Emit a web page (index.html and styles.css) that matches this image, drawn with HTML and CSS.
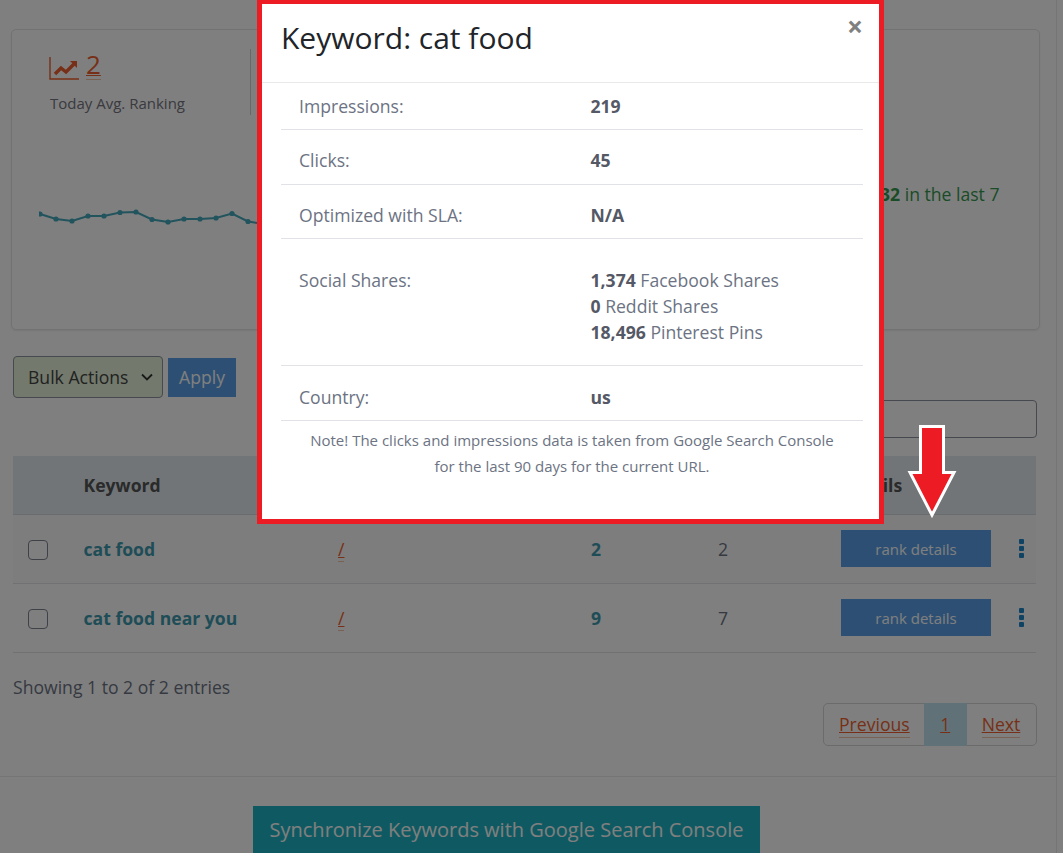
FILE: index.html
```html
<!DOCTYPE html>
<html lang="en">
<head>
    <meta charset="UTF-8">
    <meta name="viewport" content="width=device-width, initial-scale=1.0">
    <title>Keyword rank tracker</title>
    <link rel="stylesheet" href="styles.css">
</head>
<body>
    <div class="page">
        <div class="panel">
            <div class="card">
                <div class="stat">
                    <div class="stat-value">
                        <svg class="stat-icon" width="30" height="23" viewBox="0 0 30 23">
                            <path d="M1 0V22H30" fill="none" stroke="#ee5f2e" stroke-width="1.4"/>
                            <path d="M6 17L12 11L17 15L25 7" fill="none" stroke="#ee5f2e" stroke-width="3.4"/>
                            <path d="M21 4H28V11Z" fill="#ee5f2e"/>
                        </svg>
                        <a href="#" class="link stat-link">2</a>
                    </div>
                    <div class="stat-label">Today Avg. Ranking</div>
                </div>
                <div class="chart-row">
                    <svg class="chart" width="841" height="30" viewBox="0 0 841 30">
                        <polyline class="chart-line" points="1,5 17,10 33,12 49,7 65,7 81,3.500 97,3 113,10.500 129,13 145,10 161,10 177,9 193,4.500 209,12.500 225,15 241,15 257,14"/>
                        <g class="chart-dots">
                            <circle cx="1" cy="5" r="2.600"/><circle cx="17" cy="10" r="2.600"/><circle cx="33" cy="12" r="2.600"/>
                            <circle cx="49" cy="7" r="2.600"/><circle cx="65" cy="7" r="2.600"/><circle cx="81" cy="3.500" r="2.600"/>
                            <circle cx="97" cy="3" r="2.600"/><circle cx="113" cy="10.500" r="2.600"/><circle cx="129" cy="13" r="2.600"/>
                            <circle cx="145" cy="10" r="2.600"/><circle cx="161" cy="10" r="2.600"/><circle cx="177" cy="9" r="2.600"/>
                            <circle cx="193" cy="4.500" r="2.600"/><circle cx="209" cy="12.500" r="2.600"/><circle cx="225" cy="15" r="2.600"/>
                        </g>
                    </svg>
                    <div class="trend"><strong>32</strong> in the last 7</div>
                </div>
            </div>

            <div class="entries">
                <div class="bulk-row">
                    <div class="bulk-select">
                        <span>Bulk Actions</span>
                        <svg width="12" height="8" viewBox="0 0 12 8"><path d="M1 1.500L6 6.500L11 1.500" fill="none" stroke="#333" stroke-width="1.800"/></svg>
                    </div>
                    <button class="btn-apply" type="button">Apply</button>
                </div>
                <div class="search-row"><input class="search" type="text" aria-label="Search"></div>

                <table class="keywords">
                    <colgroup>
                        <col class="col-check"><col class="col-keyword"><col class="col-url"><col class="col-rank"><col class="col-start"><col>
                    </colgroup>
                    <thead>
                        <tr><th></th><th>Keyword</th><th></th><th></th><th></th><th>Details</th></tr>
                    </thead>
                    <tbody>
                        <tr class="odd">
                            <td><span class="check"></span></td>
                            <td><a href="#" class="keyword">cat food</a></td>
                            <td><a href="#" class="link">/</a></td>
                            <td><strong class="rank">2</strong></td>
                            <td>2</td>
                            <td>
                                <div class="actions">
                                    <button class="btn-rank" type="button">rank details</button>
                                    <span class="kebab"><i></i><i></i><i></i></span>
                                </div>
                            </td>
                        </tr>
                        <tr>
                            <td><span class="check"></span></td>
                            <td><a href="#" class="keyword">cat food near you</a></td>
                            <td><a href="#" class="link">/</a></td>
                            <td><strong class="rank">9</strong></td>
                            <td>7</td>
                            <td>
                                <div class="actions">
                                    <button class="btn-rank" type="button">rank details</button>
                                    <span class="kebab"><i></i><i></i><i></i></span>
                                </div>
                            </td>
                        </tr>
                    </tbody>
                </table>

                <div class="showing">Showing 1 to 2 of 2 entries</div>
                <div class="pager-row">
                    <div class="pager">
                        <a href="#" class="link">Previous</a>
                        <a href="#" class="link current">1</a>
                        <a href="#" class="link">Next</a>
                    </div>
                </div>
            </div>
        </div>
        <button class="btn-sync" type="button">Synchronize Keywords with Google Search Console</button>
    </div>

    <div class="overlay"></div>

    <div class="modal">
        <div class="modal-head">
            <h2>Keyword: cat food</h2>
            <span class="close">&times;</span>
        </div>
        <div class="modal-body">
            <div class="info-row first"><span>Impressions:</span><div class="info-val"><strong>219</strong></div></div>
            <div class="info-row"><span>Clicks:</span><div class="info-val"><strong>45</strong></div></div>
            <div class="info-row"><span>Optimized with SLA:</span><div class="info-val"><strong>N/A</strong></div></div>
            <div class="info-row social">
                <span>Social Shares:</span>
                <div class="info-val">
                    <div><strong>1,374</strong> Facebook Shares</div>
                    <div><strong>0</strong> Reddit Shares</div>
                    <div><strong>18,496</strong> Pinterest Pins</div>
                </div>
            </div>
            <div class="info-row"><span>Country:</span><div class="info-val"><strong>us</strong></div></div>
            <p class="note">Note! The clicks and impressions data is taken from Google Search Console<br>for the last 90 days for the current URL.</p>
        </div>
    </div>

    <svg class="arrow" width="54" height="98" viewBox="0 0 54 98">
        <path d="M15.500 1.500H38.500V47.500H49L27 90L5 47.500H15.500Z" fill="#ed1c24" stroke="#fff" stroke-width="3"/>
    </svg>
</body>
</html>
```

FILE: styles.css
```css
* {
    box-sizing: border-box;
}
body {
    margin: 0;
    height: 853px;
    overflow: hidden;
    font-family: "Open Sans", sans-serif;
    font-size: 17.6px;
    line-height: 26px;
    color: #6c7383;
    background: #fff;
}
.page {
    width: 1057px;
    height: 853px;
    border-right: 1px solid #ebebeb;
}
.panel {
    height: 777px;
    padding: 29px 16px 0 11px;
    border-bottom: 1px solid #ebebeb;
}
.link {
    color: #ee5f2e;
    text-decoration: underline;
    text-decoration-thickness: 1px;
    border-bottom: 1px solid #f3c4a6;
}

/* top card */
.card {
    height: 301px;
    border: 1px solid #e4e4e4;
    border-radius: 5px;
    box-shadow: 0 1px 2px rgba(0, 0, 0, 0.08);
}
.stat {
    width: 239px;
    height: 66px;
    margin-top: 19px;
    padding-left: 38px;
    border-right: 1px solid #d0d0d0;
}
.stat-value {
    display: flex;
    align-items: center;
    gap: 7px;
    height: 34px;
    margin-left: -1px;
}
.stat-icon {
    margin-top: 4px;
}
.stat-link {
    font-size: 26px;
    line-height: 30px;
    margin-top: -3px;
}
.stat-label {
    margin-top: 9px;
    font-size: 15px;
    line-height: 22px;
    color: #747480;
}
.chart-row {
    display: flex;
    align-items: flex-start;
    margin-top: 66px;
    padding-left: 27px;
}
.chart {
    margin-top: 28px;
    flex: none;
}
.chart-line {
    fill: none;
    stroke: #44a8bc;
    stroke-width: 2;
}
.chart-dots {
    fill: #44a8bc;
}
.trend {
    white-space: nowrap;
    color: #35994e;
}
.trend strong {
    font-weight: 700;
}

/* controls */
.entries {
    padding: 0 3px 0 2px;
}
.bulk-row {
    display: flex;
    align-items: center;
    gap: 5px;
    margin-top: 26px;
}
.bulk-select {
    display: flex;
    align-items: center;
    justify-content: space-between;
    width: 150px;
    height: 42px;
    padding: 0 9px 0 14px;
    color: #444;
    background: #e6f3d8;
    border: 1px solid #8d93a0;
    border-radius: 4px;
}
.btn-apply, .btn-rank {
    font-family: "Open Sans", sans-serif;
    color: #fff;
    background: #5a9fe8;
    border: none;
}
.btn-apply {
    width: 68px;
    height: 39px;
    font-size: 17.6px;
}
.search-row {
    display: flex;
    justify-content: flex-end;
    margin-top: 2px;
}
.search {
    width: 300px;
    height: 38px;
    background: #fff;
    border: 1px solid #8d93a0;
    border-radius: 4px;
}

/* keyword table */
.keywords {
    width: 1023px;
    margin-top: 18px;
    table-layout: fixed;
    border-collapse: collapse;
}
.col-check { width: 57.5px; }
.col-keyword { width: 254.5px; }
.col-url { width: 253px; }
.col-rank { width: 127px; }
.col-start { width: 123px; }
.keywords th {
    height: 58px;
    padding: 0 13px;
    text-align: left;
    font-weight: 700;
    color: #555;
    background: #e2eaf0;
    border-bottom: 1px solid #d4dae0;
}
.keywords td {
    height: 69px;
    padding: 0 13px;
    border-bottom: 1px solid #e2e2e8;
}
.keywords td:first-child {
    padding-left: 15px;
}
.keywords td:last-child {
    padding-right: 0;
}
.odd td {
    background: #fbfbfb;
}
.check {
    display: block;
    width: 20px;
    height: 20px;
    margin-top: 2px;
    background: #fff;
    border: 1px solid #7d8390;
    border-radius: 4px;
}
.keyword {
    font-weight: 700;
    color: #3f9aae;
    text-decoration: none;
}
.rank {
    color: #3f9aae;
}
.actions {
    display: flex;
    align-items: center;
}
.btn-rank {
    flex: none;
    width: 150px;
    height: 37px;
    font-size: 15px;
}
.kebab {
    display: flex;
    flex-direction: column;
    gap: 2px;
    margin-left: 28px;
}
.kebab i {
    width: 5px;
    height: 5px;
    border-radius: 1px;
    background: #1f86c8;
}

/* footer of the table */
.showing {
    margin-top: 21px;
}
.pager-row {
    display: flex;
    justify-content: flex-end;
    margin-top: 3px;
}
.pager {
    display: flex;
    align-items: center;
    width: 214px;
    height: 43px;
    padding-left: 15px;
    border: 1px solid #d6d6d6;
    border-radius: 5px;
}
.pager .current {
    display: flex;
    align-items: center;
    justify-content: center;
    flex: none;
    height: 43px;
    width: 43px;
    margin-left: 14px;
    background: #c0e5f0;
    border: none;
}
.pager .link:last-child {
    margin-left: 15px;
}
.btn-sync {
    display: block;
    width: 507px;
    height: 47px;
    margin: 29px 0 0 253px;
    font-family: "Open Sans", sans-serif;
    font-size: 20px;
    color: #fff;
    background: #1fb4c4;
    border: none;
}

/* dimmed layer and dialog */
.overlay {
    position: fixed;
    inset: 0;
    background: rgba(0, 0, 0, 0.5);
}
.modal {
    position: fixed;
    left: 257px;
    top: 0;
    width: 627px;
    height: 524px;
    background: #fff;
    border: 5px solid #ed1c24;
    border-top-width: 4px;
}
.modal-head {
    position: relative;
    height: 79px;
    padding: 14px 19px 0;
    border-bottom: 1px solid #e9e9e9;
}
.modal-head h2 {
    margin: 0;
    font-size: 30px;
    line-height: 40px;
    font-weight: 400;
    color: #212529;
}
.close {
    position: absolute;
    right: 16px;
    top: 3px;
    font-size: 28px;
    line-height: 38px;
    font-weight: 700;
    color: #808080;
}
.modal-body {
    padding: 0 16px 0 19px;
}
.info-row {
    display: flex;
    padding: 17.5px 18px 10px;
    border-bottom: 1px solid #e0e2e8;
}
.info-row span {
    width: 291.5px;
    flex: none;
}
.info-row.first {
    padding-top: 10px;
    padding-bottom: 10px;
}
.info-row.first + .info-row {
    padding-top: 17px;
    padding-bottom: 10.5px;
}
.info-row.social {
    padding-top: 28px;
    padding-bottom: 20px;
}
.info-val strong {
    font-weight: 700;
    color: #555865;
}
.note {
    margin: 6px 0 0;
    font-size: 15px;
    text-align: center;
}
.arrow {
    position: fixed;
    left: 905px;
    top: 425px;
}
```
